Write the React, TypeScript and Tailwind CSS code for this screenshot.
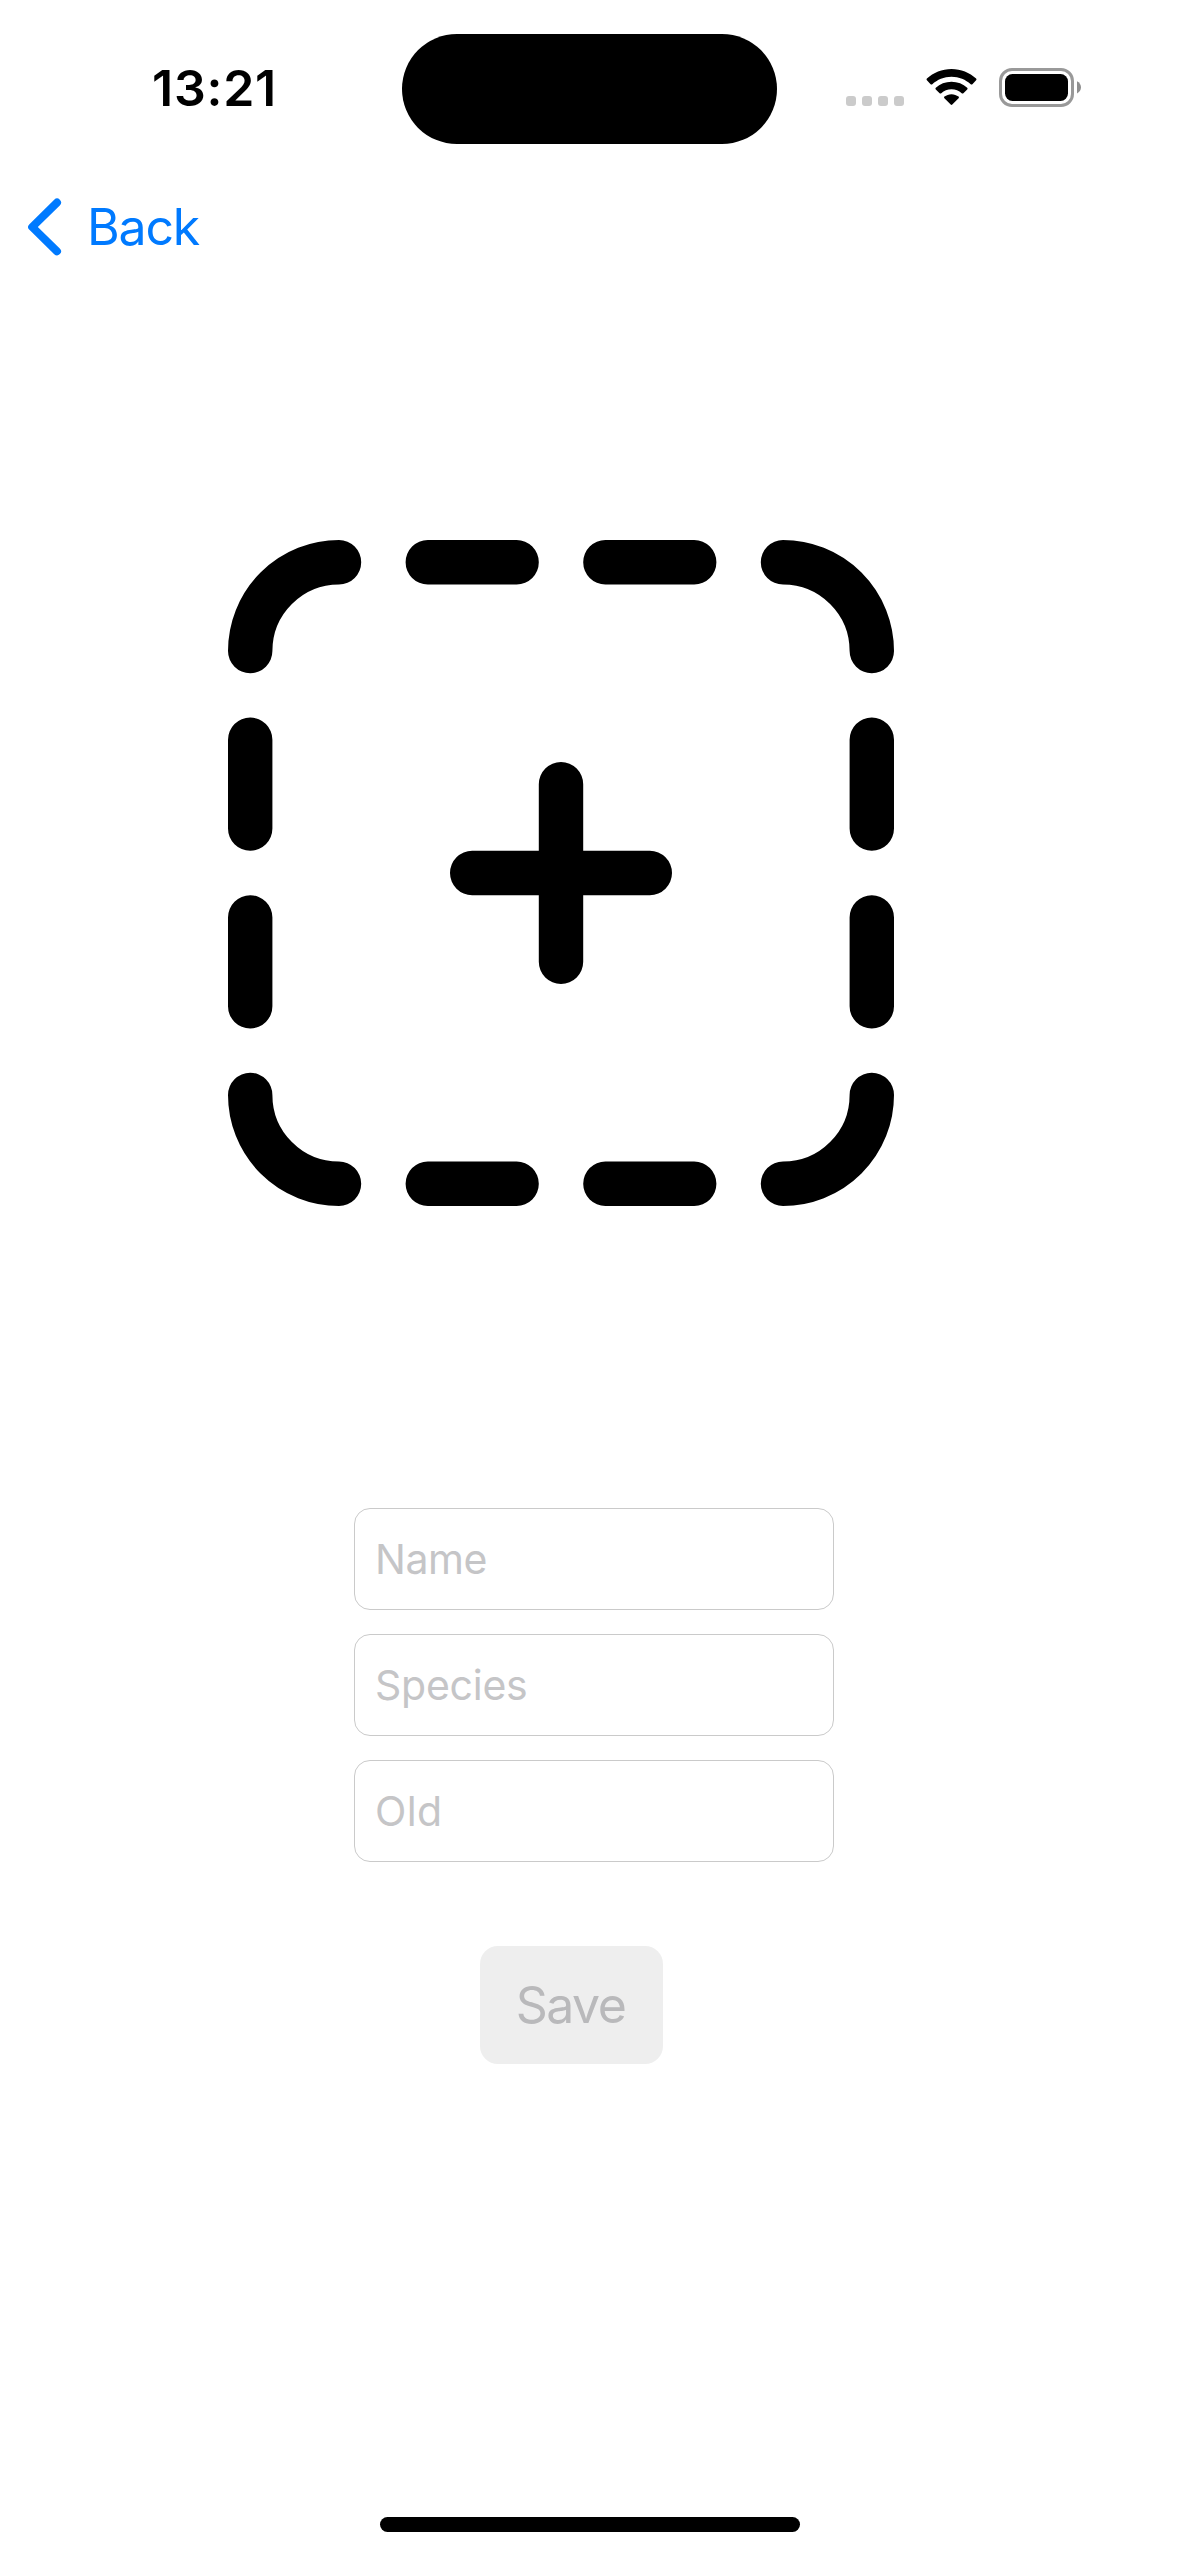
function StatusBar() {
  return (
    <div className="flex h-[176px] items-center">
      <div className="w-[402px] pl-[152px]">
        <span className="block text-[50px] font-semibold leading-[60px] tracking-[0.75px] text-black">13:21</span>
      </div>
      <div className="mt-[2px] h-[110px] w-[375px] rounded-full bg-black" />
      <div className="-mt-[1px] ml-[69px] flex h-[39px] items-center">
        <div className="mt-[26px] flex gap-[6px]">
          <span className="size-[10px] rounded-[3px] bg-[#cbcbcb]" />
          <span className="size-[10px] rounded-[3px] bg-[#cbcbcb]" />
          <span className="size-[10px] rounded-[3px] bg-[#cbcbcb]" />
          <span className="size-[10px] rounded-[3px] bg-[#cbcbcb]" />
        </div>
        <WifiIcon />
        <BatteryIcon />
      </div>
    </div>
  );
}

function WifiIcon() {
  return (
    <svg className="ml-[22px] h-[39px] w-[51px]" viewBox="0 0 51 39" fill="black">
      <path d="M25.5 8.7C33 8.7 39.7 11.6 44.7 16.2C45.2 16.7 45.9 16.7 46.4 16.2L50.1 12.3C50.6 11.8 50.6 11.1 50.1 10.6C43.6 4.5 35 1 25.5 1C16 1 7.4 4.5 0.9 10.6C0.4 11.1 0.4 11.8 0.9 12.3L4.6 16.2C5.1 16.7 5.8 16.7 6.3 16.2C11.3 11.6 18 8.7 25.5 8.7Z" />
      <path d="M25.5 21.3C29.4 21.3 33 22.8 35.7 25.2C36.2 25.7 36.9 25.7 37.4 25.2L41.2 21.4C41.7 20.9 41.7 20.2 41.2 19.7C37.1 15.9 31.6 13.7 25.5 13.7C19.4 13.7 13.9 15.9 9.8 19.7C9.3 20.2 9.3 20.9 9.8 21.4L13.6 25.2C14.1 25.7 14.8 25.7 15.3 25.2C18 22.8 21.6 21.3 25.5 21.3Z" />
      <path d="M32.6 30.2C33.1 29.7 33.1 29 32.5 28.6C30.6 27.1 28.2 26.2 25.5 26.2C22.8 26.2 20.4 27.1 18.5 28.6C17.9 29 17.9 29.7 18.4 30.2L24.7 36.6C25.2 37.1 25.8 37.1 26.3 36.6Z" />
    </svg>
  );
}

function BatteryIcon() {
  return (
    <svg className="ml-[22px] h-[39px] w-[83px]" viewBox="0 0 83 39">
      <rect x="1.5" y="1.5" width="72" height="36" rx="11.5" fill="none" stroke="#999" strokeWidth="3" />
      <rect x="6" y="6" width="63" height="27" rx="7.5" fill="black" />
      <path d="M78 13.2C80.4 14.2 82 16.6 82 19.3C82 22 80.4 24.4 78 25.4Z" fill="#8f8f8f" />
    </svg>
  );
}

function NavBar() {
  return (
    <nav className="flex h-[102px] items-center pl-[28px] text-[#007aff]">
      <svg className="h-[58px] w-[34px]" viewBox="0 0 34 58" fill="none" stroke="currentColor" strokeWidth="8" strokeLinecap="round" strokeLinejoin="round">
        <path d="M29 4.6L4.2 29L29 53.3" />
      </svg>
      <span className="ml-[25px] text-[50px] leading-[60px] tracking-[-1.2px]">Back</span>
    </nav>
  );
}

// Dashed rounded square with a plus, on a grid of 15 × 15 units.
function AddPhoto() {
  return (
    <svg className="ml-[228px] mt-[262px] h-[666px] w-[666px]" viewBox="0 0 15 15" fill="none" stroke="black" strokeWidth="1" strokeLinecap="round">
      <path d="M0.5 2.5A2 2 0 0 1 2.5 0.5M4.5 0.5H6.5M8.5 0.5H10.5M12.5 0.5A2 2 0 0 1 14.5 2.5" />
      <path d="M0.5 4.5V6.5M0.5 8.5V10.5M14.5 4.5V6.5M14.5 8.5V10.5" />
      <path d="M0.5 12.5A2 2 0 0 0 2.5 14.5M4.5 14.5H6.5M8.5 14.5H10.5M12.5 14.5A2 2 0 0 0 14.5 12.5" />
      <path d="M7.5 5.5V9.5M5.5 7.5H9.5" />
    </svg>
  );
}

const fields = [
  { label: "Name", tracking: "tracking-[-0.45px]" },
  { label: "Species", tracking: "tracking-[-0.25px]" },
  { label: "Old", tracking: "tracking-[0.4px]" },
];

export default function App() {
  return (
    <main className="flex h-[2556px] w-[1179px] flex-col overflow-hidden bg-white font-['Inter',sans-serif]">
      <StatusBar />
      <NavBar />
      <AddPhoto />
      <form className="mt-[302px] flex flex-col">
        <div className="ml-[354px] flex w-[480px] flex-col gap-[24px]">
          {fields.map((f) => (
            <input
              key={f.label}
              placeholder={f.label}
              className={`h-[102px] rounded-[16px] border border-[#cacaca] bg-white pl-[20px] text-[41px] text-black placeholder:text-[#c5c5c7] ${f.tracking}`}
            />
          ))}
        </div>
        <button
          type="button"
          disabled
          className="ml-[480px] mt-[84px] h-[118px] w-[183px] rounded-[18px] bg-[#eeeeee] pr-[2px] text-[50px] tracking-[-1.5px] text-[#b9b9bb]"
        >
          Save
        </button>
      </form>
      <div className="ml-[380px] mt-[453px] h-[15px] w-[420px] shrink-0 rounded-full bg-black" />
    </main>
  );
}
